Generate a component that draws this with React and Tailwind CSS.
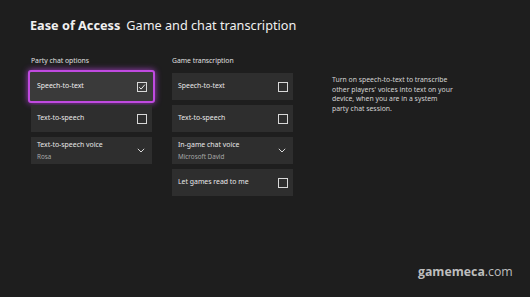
import React from "react";

const FONT = { fontFamily: '"Noto Sans", "Open Sans", sans-serif' };

const Checkbox = ({ checked }) => (
  <div className="w-[10px] h-[10px] border border-[#d8d8d8] flex items-center justify-center">
    {checked && (
      <svg width="8" height="8" viewBox="0 0 8 8">
        <path d="M1.2 4.2 L3.1 6.1 L6.9 1.6" fill="none" stroke="#e8e8e8" strokeWidth="1" />
      </svg>
    )}
  </div>
);

const Chevron = () => (
  <svg width="8" height="5" viewBox="0 0 8 5" className="mr-[1px]">
    <path d="M0.8 0.8 L4 4 L7.2 0.8" fill="none" stroke="#d8d8d8" strokeWidth="1" />
  </svg>
);

function CheckRow({ label, checked, focused }) {
  if (focused) {
    return (
      <div className="-mx-[3px] -my-[3px] h-[33px] rounded-[3px] border-2 border-[#c04ae0] bg-[#3a3a3a] shadow-[0_0_6px_#a23fc4] flex items-center justify-between pl-[7px] pr-[6px]">
        <span className="text-[6.9px] text-[#f0f0f0]">{label}</span>
        <Checkbox checked={checked} />
      </div>
    );
  }
  return (
    <div className="h-[27px] bg-[#2e2e2e] flex items-center justify-between pl-[6px] pr-[5px]">
      <span className="text-[6.9px] text-[#e8e8e8]">{label}</span>
      <Checkbox checked={checked} />
    </div>
  );
}

function SelectRow({ label, value }) {
  return (
    <div className="h-[27px] bg-[#2e2e2e] flex items-center justify-between pl-[6px] pr-[6px]">
      <div className="flex flex-col leading-[12px]">
        <span className="text-[6.9px] text-[#e8e8e8]">{label}</span>
        <span className="text-[6.3px] text-[#a8a8a8]">{value}</span>
      </div>
      <Chevron />
    </div>
  );
}

export default function App() {
  return (
    <div className="w-[530px] h-[297px] bg-[#1e1e1e] overflow-hidden relative" style={FONT}>
      <div className="pl-[30px] pt-[16px] flex items-baseline gap-[6px] text-[#f0f0f0] leading-[18px]">
        <span className="text-[12.7px] font-bold">Ease of Access</span>
        <span className="text-[12.7px]">Game and chat transcription</span>
      </div>

      <div className="flex pl-[31px] pt-[21px] gap-[20px]">
        <div className="w-[121px] flex flex-col">
          <div className="text-[6.8px] text-[#e0e0e0] h-[12px] leading-[12px] mb-[6px]">Party chat options</div>
          <div className="flex flex-col gap-[5px]">
            <CheckRow label="Speech-to-text" checked focused />
            <CheckRow label="Text-to-speech" />
            <SelectRow label="Text-to-speech voice" value="Rosa" />
          </div>
        </div>

        <div className="w-[121px] flex flex-col">
          <div className="text-[6.8px] text-[#e0e0e0] h-[12px] leading-[12px] mb-[6px]">Game transcription</div>
          <div className="flex flex-col gap-[5px]">
            <CheckRow label="Speech-to-text" />
            <CheckRow label="Text-to-speech" />
            <SelectRow label="In-game chat voice" value="Microsoft David" />
            <CheckRow label="Let games read to me" />
          </div>
        </div>

        <div className="w-[122px] ml-[19px] pt-[20px] text-[6.85px] leading-[9.7px] text-[#d4d4d4]">
          Turn on speech-to-text to transcribe other players' voices into text on your device, when you are in a system party chat session.
        </div>
      </div>

      <div className="absolute left-[418px] top-[263px] text-[12.3px] text-[#bdbdbd]" style={{ fontFamily: '"Open Sans", sans-serif' }}>
        <span className="font-bold">gamemeca</span>
        <span className="font-normal">.com</span>
      </div>
    </div>
  );
}
